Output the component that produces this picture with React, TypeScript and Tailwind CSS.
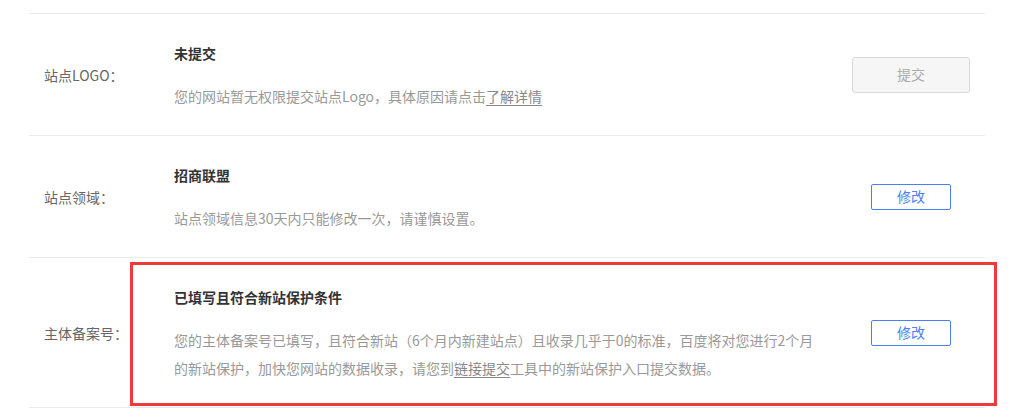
import React from "react";

const font = { fontFamily: '"Noto Sans CJK SC", "Noto Sans", sans-serif' };

function Row({
  label,
  title,
  children,
  button,
}: {
  label: string;
  title: string;
  children: React.ReactNode;
  button: React.ReactNode;
}) {
  return (
    <div className="flex border-b border-[#ebebeb]">
      <div className="w-[145px] shrink-0 pl-[15px] flex items-center text-[14px] text-[#666] leading-[20px]">
        {label}
      </div>
      <div className="flex-1 pt-[29px] pb-[25px]">
        <div className="text-[14px] leading-[20px] font-bold text-[#333]">{title}</div>
        <div className="mt-[19px] w-[646px] text-[14px] leading-[28px] text-[#999]">{children}</div>
      </div>
      <div className="w-[118px] mr-[15px] shrink-0 flex items-center justify-center">{button}</div>
    </div>
  );
}

export default function App() {
  return (
    <div className="relative w-[1032px] h-[412px] bg-white overflow-hidden" style={font}>
      <div className="ml-[29px] w-[956px] pt-[13px]">
        <div className="border-t border-[#ebebeb]">
          <Row
            label="站点LOGO："
            title="未提交"
            button={
              <button className="w-[118px] h-[36px] rounded-[3px] border border-[#d9d9d9] bg-[#f6f6f6] text-[14px] text-[#aaa]">
                提交
              </button>
            }
          >
            您的网站暂无权限提交站点Logo，具体原因请点击
            <span className="underline underline-offset-[3px] text-[#888]">了解详情</span>
          </Row>
          <Row
            label="站点领域："
            title="招商联盟"
            button={
              <button className="w-[80px] h-[26px] rounded-[2px] border border-[#4a80f5] bg-white text-[14px] text-[#4a7ff5]">
                修改
              </button>
            }
          >
            站点领域信息30天内只能修改一次，请谨慎设置。
          </Row>
          <Row
            label="主体备案号："
            title="已填写且符合新站保护条件"
            button={
              <button className="w-[80px] h-[26px] rounded-[2px] border border-[#4a80f5] bg-white text-[14px] text-[#4a7ff5]">
                修改
              </button>
            }
          >
            您的主体备案号已填写，且符合新站（6个月内新建站点）且收录几乎于0的标准，百度将对您进行2个月的新站保护，加快您网站的数据收录，请您到
            <span className="underline underline-offset-[3px] text-[#888]">链接提交</span>
            工具中的新站保护入口提交数据。
          </Row>
        </div>
      </div>
      <div className="absolute left-[130px] top-[262px] w-[867px] h-[144px] border-[3px] border-[#ef3a3c] pointer-events-none" />
    </div>
  );
}
